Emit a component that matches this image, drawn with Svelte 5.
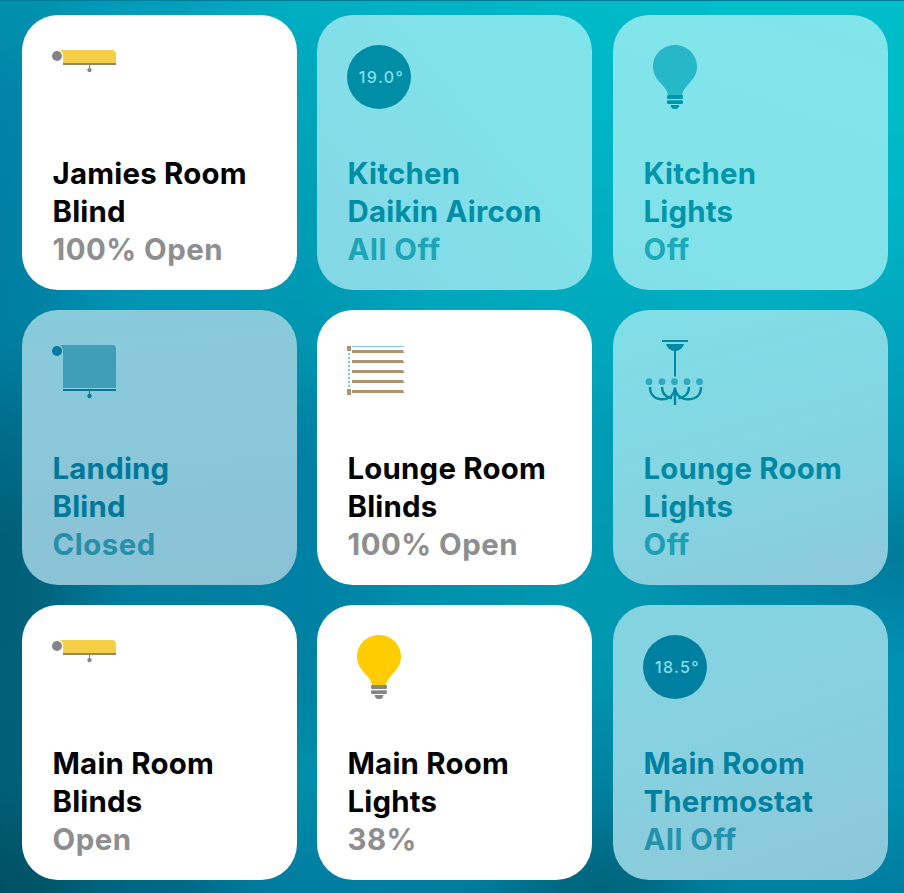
<script>
  const tiles = [
    { icon: 'blind', on: true, lines: ['Jamies Room', 'Blind'], status: '100% Open' },
    { icon: 'temp', value: '19.0°', lines: ['Kitchen', 'Daikin Aircon'], status: 'All Off', ink: '#008ea6', soft: '#1ba5b6', glass: 'linear-gradient(50deg, #84d7e5, #82dfe8 50%, #80e6eb)' },
    { icon: 'bulb', lines: ['Kitchen', 'Lights'], status: 'Off', ink: '#0095a9', soft: '#1aabb9', glass: 'linear-gradient(20deg, #82dfe8, #82e4ea 50%, #80e6eb)' },
    { icon: 'shade', lines: ['Landing', 'Blind'], status: 'Closed', ink: '#007899', soft: '#278faa', glass: 'linear-gradient(175deg, #88cbdb, #8ac8da 40%, #8ac2d4)' },
    { icon: 'slats', on: true, lines: ['Lounge Room', 'Blinds'], status: '100% Open' },
    { icon: 'chandelier', lines: ['Lounge Room', 'Lights'], status: 'Off', ink: '#0088a3', soft: '#1ca0b3', glass: 'linear-gradient(165deg, #80dfe8, #84d5e2 55%, #8dc9dc)' },
    { icon: 'blind', on: true, lines: ['Main Room', 'Blinds'], status: 'Open' },
    { icon: 'bulb', on: true, lines: ['Main Room', 'Lights'], status: '38%' },
    { icon: 'temp', value: '18.5°', lines: ['Main Room', 'Thermostat'], status: 'All Off', ink: '#0080a0', soft: '#2393ad', glass: 'linear-gradient(160deg, #84d4e1, #88d0df 50%, #8dc7d9)' }
  ];

  // Wallpaper colour samples, blended together by the blur filter.
  const wallpaper = [
    ['#0090ae', '#009fb8', '#00aec2', '#00b3c4', '#00bac8', '#00bdca', '#00bdca'],
    ['#0082a7', '#0097b5', '#00a4bb', '#00b0c2', '#00b5c6', '#00c3cd', '#00bbc8'],
    ['#007fa3', '#0091b1', '#009cb6', '#00acc0', '#00aec1', '#00b3c4', '#00b3c4'],
    ['#007ea1', '#0096b7', '#0096b1', '#00a5ba', '#00a9bd', '#00acc0', '#00a5bd'],
    ['#006987', '#0894b7', '#007fa4', '#0095b2', '#009bb4', '#00a6be', '#0098b3'],
    ['#005d74', '#0080a2', '#0080a4', '#0090ae', '#0099b1', '#0088a8', '#00799b'],
    ['#006077', '#007b9c', '#0080a3', '#0094b0', '#0096b0', '#0090b0', '#0092b4'],
    ['#005f77', '#007b9d', '#008eac', '#0090ad', '#0083a2', '#0090b0', '#0091b0'],
    ['#005063', '#006681', '#007da0', '#007b9c', '#00637a', '#0080a0', '#007da0']
  ];
</script>

<main>
  <svg class="wallpaper" viewBox="0 0 904 893" preserveAspectRatio="none" aria-hidden="true">
    <defs>
      <filter id="blend" filterUnits="userSpaceOnUse" x="-200" y="-200" width="1304" height="1293" color-interpolation-filters="sRGB">
        <feGaussianBlur stdDeviation="38" />
      </filter>
    </defs>
    <g filter="url(#blend)">
      {#each wallpaper as row, r}
        {#each row as color, c}
          <rect
            x={c === 0 ? -200 : c * 150 - 75}
            y={r === 0 ? -200 : r * 111 - 56}
            width={c === 0 ? 276 : c === 6 ? 300 : 151}
            height={r === 0 ? 256 : r === 8 ? 300 : 112}
            fill={color}
          />
        {/each}
      {/each}
    </g>
  </svg>

  <div class="grid">
    {#each tiles as tile}
      <article class="tile" class:on={tile.on} style:--ink={tile.ink} style:--soft={tile.soft} style:--glass={tile.glass}>
        <div class="icon">
          {#if tile.icon === 'temp'}
            <span class="temp">{tile.value}</span>
          {:else}
            <svg viewBox="0 0 64 64" width="64" height="64" aria-hidden="true">
              {#if tile.icon === 'blind'}
                <path d="M8 5H60Q64 5 64 9V18H11V11Q11 7 8 5Z" fill="#f5cf47" />
                <path d="M11 18H64V20H11Z" fill="#938767" />
                <circle cx="5" cy="11" r="5" fill="#858585" />
                <path d="M37 20H38V22.9A2.2 2.2 0 1 1 37 22.9Z" fill="#858585" />
              {:else if tile.icon === 'shade'}
                <path d="M8 5H60Q64 5 64 9V48H11V11Q11 7 8 5Z" fill="#3f9fb9" />
                <path d="M11 48H64V49H11Z" fill="#8fd3e2" />
                <path d="M11 49H64V51H11Z" fill="#007899" />
                <circle cx="5" cy="11" r="5" fill="#007c9f" />
                <path d="M37 51H38V53.8A2.2 2.2 0 1 1 37 53.8Z" fill="#007899" />
              {:else if tile.icon === 'slats'}
                <path d="M5 6.5H57" stroke="#7dd0e8" stroke-width="1" />
                <path d="M2 13V49" stroke="#6bcbea" stroke-width="2" stroke-dasharray="2 2" />
                <path d="M0 6H4V11H0ZM0 49H4V55H0Z" fill="#ad9270" />
                {#each [10, 20, 30, 40, 50] as y}
                  <path d="M5 {y}H56L57.3 {y + 3}H5Z" fill="#ae9370" />
                {/each}
              {:else if tile.icon === 'bulb'}
                <path
                  class="glass"
                  d="M32 0C44 0 54 9.5 54 21.5C54 29 50.5 33.5 46 38.5C42 43 39.5 46 39 50H25C24.5 46 22 43 18 38.5C13.5 33.5 10 29 10 21.5C10 9.5 20 0 32 0Z"
                />
                <g class="base">
                  <rect x="24" y="50" width="16" height="4" rx="1.3" />
                  <rect x="24" y="55.3" width="16" height="3.8" rx="1.3" />
                  <path d="M27.5 60H36.5Q35.5 64 33 64H31Q28.5 64 27.5 60Z" />
                </g>
              {:else}
                <path d="M19 0H45V2H19Z" fill="#0089a2" />
                <path d="M23 4H41Q39 11 32 11Q25 11 23 4Z" fill="#0089a2" />
                <path d="M32 10V36.5" stroke="#0089a2" stroke-width="2" />
                <g fill="#31a9bc">
                  {#each [6, 19, 31.5, 44, 56.5] as x}
                    <circle cx={x} cy="41.7" r="3.4" />
                  {/each}
                </g>
                <path
                  d="M7 47C7 55 12 59.3 19 59.3C27 59.3 31.5 54 32 47.5C32.5 54 37 59.3 45 59.3C53 59.3 58 55 58 47M19 47C19 53 23 58 29 58M46 47C46 53 42 58 35.5 58M32 48V65"
                  fill="none"
                  stroke="#0089a2"
                  stroke-width="2.4"
                />
              {/if}
            </svg>
          {/if}
        </div>
        <div class="label">
          {#each tile.lines as line}
            <div>{line}</div>
          {/each}
          <div class="status">{tile.status}</div>
        </div>
      </article>
    {/each}
  </div>
</main>

<style>
  main {
    position: relative;
    box-sizing: border-box;
    width: 904px;
    height: 893px;
    padding: 14px 16px 13px 22px;
    overflow: hidden;
    background: #009ab5;
    border-top: 1px solid #007b97;
    font-family: Inter, 'Liberation Sans', sans-serif;
  }
  .wallpaper {
    position: absolute;
    inset: 0;
    width: 100%;
    height: 100%;
  }
  .grid {
    position: relative;
    display: grid;
    grid-template-columns: 295px 296px 275px;
    grid-auto-rows: 275px;
    row-gap: 20px;
  }
  .tile {
    box-sizing: border-box;
    display: flex;
    flex-direction: column;
    justify-content: space-between;
    width: 275px;
    padding: 30px 20px 21px 30px;
    border-radius: 36px;
    background: var(--glass);
    color: var(--ink);
  }
  .on {
    background: #fff;
    color: #000;
  }
  .icon {
    width: 64px;
    height: 64px;
  }
  .icon svg {
    display: block;
    overflow: visible;
  }
  .temp {
    display: flex;
    align-items: center;
    justify-content: center;
    box-sizing: border-box;
    width: 64px;
    height: 64px;
    padding-left: 5px;
    border-radius: 50%;
    background: var(--ink);
    color: #83dfe9;
    font-size: 16px;
    font-weight: 500;
    letter-spacing: 1.4px;
  }
  .glass {
    fill: #27b8c8;
  }
  .base {
    fill: #0097ad;
  }
  .on .glass {
    fill: #fc0;
  }
  .on .base {
    fill: #858585;
  }
  .label {
    padding-left: 0.5px;
    font-size: 29.4px;
    font-weight: 700;
    line-height: 38px;
    letter-spacing: 0.22px;
    white-space: nowrap;
  }
  .status {
    color: var(--soft);
    letter-spacing: 0.5px;
  }
  .on .status {
    color: #8e8e90;
  }
</style>
